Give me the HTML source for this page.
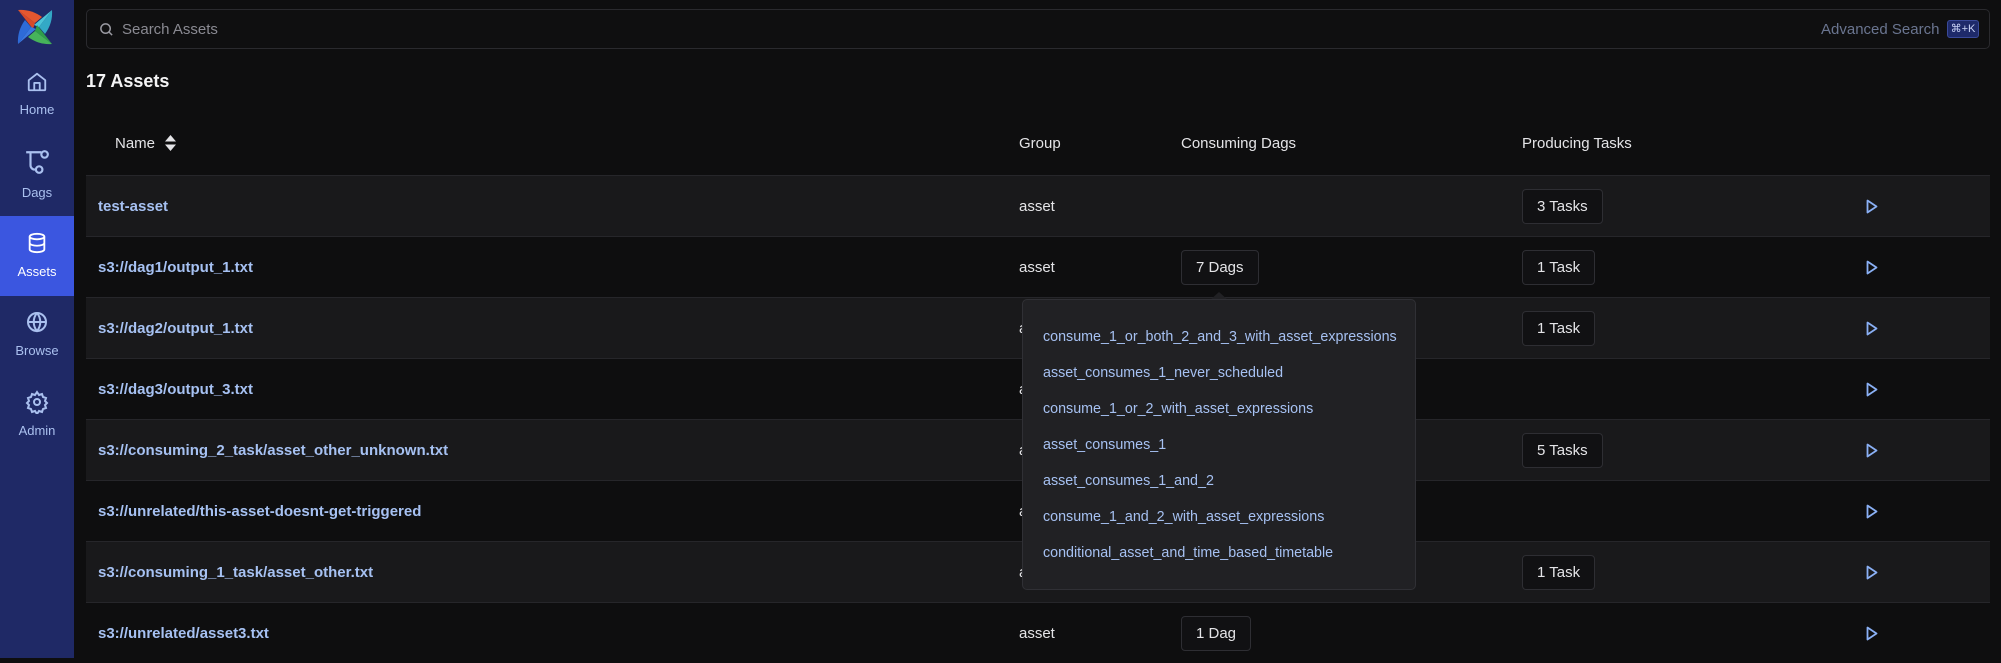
<!DOCTYPE html>
<html><head><meta charset="utf-8"><style>
*{margin:0;padding:0;box-sizing:border-box}
body{width:2001px;height:658px;background:#0e0e0f;font-family:"Liberation Sans",sans-serif;overflow:hidden;position:relative;color:#e4e4e7}
.sb{position:absolute;left:0;top:0;width:74px;height:658px;background:#1f2966}
.nav{position:absolute;left:0;width:74px;text-align:center;color:#aac0ef;font-size:13px}
.nav svg{display:block;margin:0 auto}
.act{background:#3b56e0;color:#fff}
.search{position:absolute;left:86px;top:9px;width:1904px;height:40px;border:1px solid #2a2a2e;border-radius:5px;background:#0f0f10}
.abs{position:absolute}
.row{position:absolute;left:86px;width:1904px;height:61px;border-top:1px solid #26262a}
.odd{background:#19191b}
.name{position:absolute;left:12px;top:22px;color:#a6c1f2;font-weight:bold;font-size:15px}
.grp{position:absolute;left:933px;top:22px;font-size:15px;color:#e4e4e7}
.btn{position:absolute;top:13px;height:35px;border:1px solid #2e2e33;border-radius:4px;background:#111113;font-size:15px;line-height:33px;padding:0 14px;color:#e4e4e7}
.play{position:absolute;left:1780px;top:23px}
.pop{position:absolute;left:1022px;top:299px;width:394px;height:291px;background:#212124;border:1px solid #303035;border-radius:5px}
.pop div{position:absolute;left:20px;font-size:14.3px;color:#a6c1f2}
</style></head><body>
<div class="sb">
 <svg class="abs" style="left:17px;top:9px" width="36" height="36" viewBox="0 0 36 36">
  <path d="M1 1 L18 14 L16 20 Z" fill="#d84a2a"/><path d="M1 1 Q14 0 25 8 L18 14Z" fill="#e5572f"/>
  <path d="M35 1 L22 18 L17 16 Z" fill="#4cc4d8"/><path d="M35 1 Q36 14 28 25 L22 18Z" fill="#33a9c6"/>
  <path d="M35 35 L18 22 L20 16 Z" fill="#2f9e4a"/><path d="M35 35 Q22 36 11 28 L18 22Z" fill="#46b35a"/>
  <path d="M1 35 L14 18 L19 20 Z" fill="#3a78e0"/><path d="M1 35 Q0 22 8 11 L14 18Z" fill="#2e6bd8"/>
 </svg>
 <div class="nav" style="top:71px"><svg width="22" height="22" viewBox="0 0 24 24" fill="none" stroke="#aac0ef" stroke-width="2" stroke-linejoin="round"><path d="M3 10 L12 3 L21 10 V20 a1 1 0 0 1-1 1 H4 a1 1 0 0 1-1-1Z"/><path d="M9 21 V13 H15 V21"/></svg><div style="margin-top:9px">Home</div></div>
 <div class="nav" style="top:149px"><svg width="26" height="26" viewBox="0 0 24 24" fill="none" stroke="#aac0ef" stroke-width="2"><circle cx="19" cy="5" r="3"/><circle cx="14" cy="19" r="3"/><path d="M2 3 H16 M6 3 V15 a4 4 0 0 0 4 4 H11"/></svg><div style="margin-top:10px">Dags</div></div>
 <div class="nav act" style="top:216px;height:80px;padding-top:15px"><svg width="22" height="24" viewBox="0 0 24 24" fill="none" stroke="#fff" stroke-width="2"><ellipse cx="12" cy="5" rx="8" ry="3"/><path d="M4 5 V19 a8 3 0 0 0 16 0 V5 M4 12 a8 3 0 0 0 16 0"/></svg><div style="margin-top:9px">Assets</div></div>
 <div class="nav" style="top:310px"><svg width="24" height="24" viewBox="0 0 24 24" fill="none" stroke="#aac0ef" stroke-width="2"><circle cx="12" cy="12" r="9"/><path d="M3 12 H21 M12 3 a14 14 0 0 1 0 18 a14 14 0 0 1 0-18"/></svg><div style="margin-top:9px">Browse</div></div>
 <div class="nav" style="top:390px"><svg width="24" height="24" viewBox="0 0 24 24" fill="none" stroke="#aac0ef" stroke-width="2"><circle cx="12" cy="12" r="3"/><path d="M12 2 l2 3 3-1 1 3 3 1-1 3 2 2-2 2 1 3-3 1-1 3-3-1-2 3-2-3-3 1-1-3-3-1 1-3-2-2 2-2-1-3 3-1 1-3 3 1Z"/></svg><div style="margin-top:9px">Admin</div></div>
</div>
<div class="search">
 <svg class="abs" style="left:12px;top:12px" width="15" height="15" viewBox="0 0 24 24" fill="none" stroke="#9a9aa2" stroke-width="2.4"><circle cx="10.5" cy="10.5" r="7.5"/><path d="M16 16 L21 21"/></svg>
 <div class="abs" style="left:35px;top:11px;font-size:15px;color:#8a8a92">Search Assets</div>
 <div class="abs" style="left:1734px;top:11px;font-size:15px;color:#6a7590">Advanced Search</div>
 <div class="abs" style="left:1860px;top:10px;width:32px;height:18px;background:#1e2a6a;border:1px solid #3a4a9a;border-radius:3px;font-size:11px;color:#c8d2f5;text-align:center;line-height:16px">⌘+K</div>
</div>
<div class="abs" style="left:86px;top:71px;font-size:18px;font-weight:bold;color:#f4f4f5">17 Assets</div>
<div class="abs" style="left:115px;top:135px;font-size:15px">Name</div>
<svg class="abs" style="left:164px;top:134px" width="13" height="18" viewBox="0 0 13 18"><path d="M6.5 1 L12 7.5 H1Z M6.5 17 L12 10.5 H1Z" fill="#e4e4e7"/></svg>
<div class="abs" style="left:1019px;top:135px;font-size:15px">Group</div>
<div class="abs" style="left:1181px;top:135px;font-size:15px">Consuming Dags</div>
<div class="abs" style="left:1522px;top:135px;font-size:15px">Producing Tasks</div>

<div class="row odd" style="top:175px"><div class="name">test-asset</div><div class="grp">asset</div><div class="btn" style="left:1436px">3 Tasks</div><svg class="play" width="12" height="15" viewBox="0 0 12 15"><path d="M1.5 1.5 L10.5 7.5 L1.5 13.5Z" fill="none" stroke="#8ab0f5" stroke-width="1.8" stroke-linejoin="round"/></svg></div>
<div class="row" style="top:236px"><div class="name">s3://dag1/output_1.txt</div><div class="grp">asset</div><div class="btn" style="left:1095px">7 Dags</div><div class="btn" style="left:1436px">1 Task</div><svg class="play" width="12" height="15" viewBox="0 0 12 15"><path d="M1.5 1.5 L10.5 7.5 L1.5 13.5Z" fill="none" stroke="#8ab0f5" stroke-width="1.8" stroke-linejoin="round"/></svg></div>
<div class="row odd" style="top:297px"><div class="name">s3://dag2/output_1.txt</div><div class="grp">asset</div><div class="btn" style="left:1436px">1 Task</div><svg class="play" width="12" height="15" viewBox="0 0 12 15"><path d="M1.5 1.5 L10.5 7.5 L1.5 13.5Z" fill="none" stroke="#8ab0f5" stroke-width="1.8" stroke-linejoin="round"/></svg></div>
<div class="row" style="top:358px"><div class="name">s3://dag3/output_3.txt</div><div class="grp">asset</div><svg class="play" width="12" height="15" viewBox="0 0 12 15"><path d="M1.5 1.5 L10.5 7.5 L1.5 13.5Z" fill="none" stroke="#8ab0f5" stroke-width="1.8" stroke-linejoin="round"/></svg></div>
<div class="row odd" style="top:419px"><div class="name">s3://consuming_2_task/asset_other_unknown.txt</div><div class="grp">asset</div><div class="btn" style="left:1436px">5 Tasks</div><svg class="play" width="12" height="15" viewBox="0 0 12 15"><path d="M1.5 1.5 L10.5 7.5 L1.5 13.5Z" fill="none" stroke="#8ab0f5" stroke-width="1.8" stroke-linejoin="round"/></svg></div>
<div class="row" style="top:480px"><div class="name">s3://unrelated/this-asset-doesnt-get-triggered</div><div class="grp">asset</div><svg class="play" width="12" height="15" viewBox="0 0 12 15"><path d="M1.5 1.5 L10.5 7.5 L1.5 13.5Z" fill="none" stroke="#8ab0f5" stroke-width="1.8" stroke-linejoin="round"/></svg></div>
<div class="row odd" style="top:541px"><div class="name">s3://consuming_1_task/asset_other.txt</div><div class="grp">asset</div><div class="btn" style="left:1436px">1 Task</div><svg class="play" width="12" height="15" viewBox="0 0 12 15"><path d="M1.5 1.5 L10.5 7.5 L1.5 13.5Z" fill="none" stroke="#8ab0f5" stroke-width="1.8" stroke-linejoin="round"/></svg></div>
<div class="row" style="top:602px"><div class="name">s3://unrelated/asset3.txt</div><div class="grp">asset</div><div class="btn" style="left:1095px">1 Dag</div><svg class="play" width="12" height="15" viewBox="0 0 12 15"><path d="M1.5 1.5 L10.5 7.5 L1.5 13.5Z" fill="none" stroke="#8ab0f5" stroke-width="1.8" stroke-linejoin="round"/></svg></div>

<svg class="abs" style="left:1209px;top:291px" width="20" height="10" viewBox="0 0 20 10"><path d="M0 10 L10 1 L20 10Z" fill="#212124"/></svg>
<div class="pop">
 <div style="top:29px">consume_1_or_both_2_and_3_with_asset_expressions</div>
 <div style="top:65px">asset_consumes_1_never_scheduled</div>
 <div style="top:101px">consume_1_or_2_with_asset_expressions</div>
 <div style="top:137px">asset_consumes_1</div>
 <div style="top:173px">asset_consumes_1_and_2</div>
 <div style="top:209px">consume_1_and_2_with_asset_expressions</div>
 <div style="top:245px">conditional_asset_and_time_based_timetable</div>
</div>
</body></html>
